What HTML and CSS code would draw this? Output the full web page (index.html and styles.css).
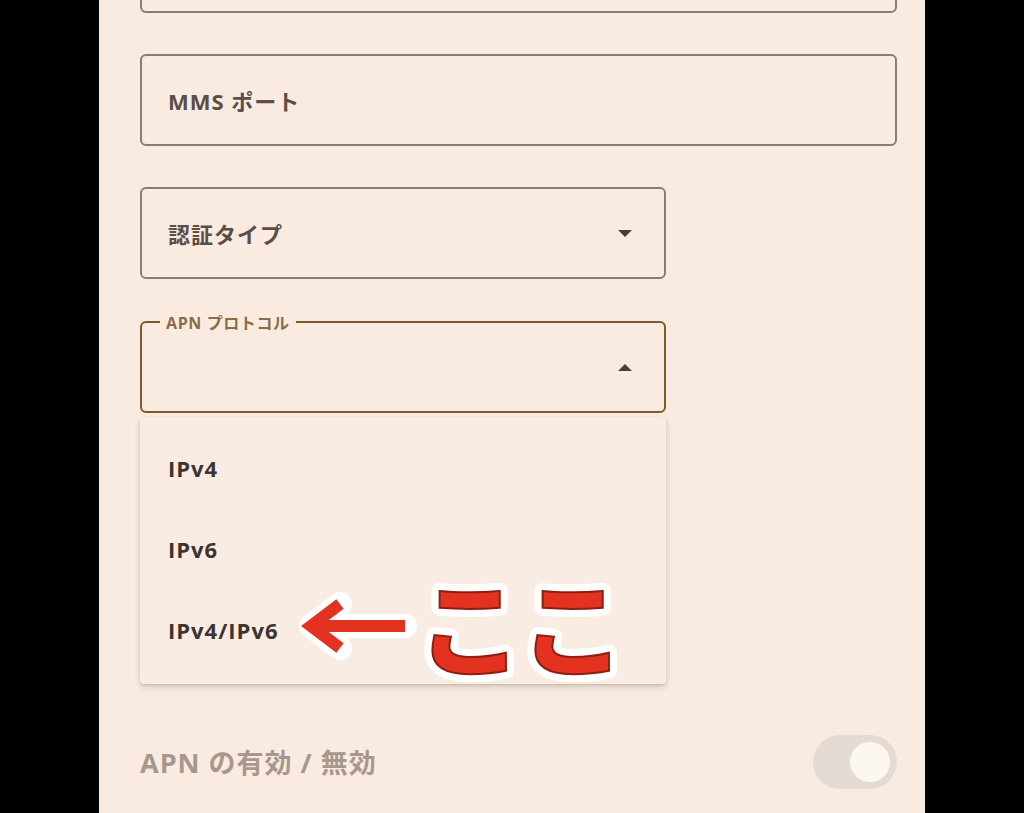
FILE: index.html
```html
<!DOCTYPE html>
<html lang="ja">
<head>
    <meta charset="UTF-8">
    <meta name="viewport" content="width=device-width, initial-scale=1.0">
    <title>APN 設定</title>
    <link rel="stylesheet" href="styles.css">
</head>
<body>

    <div class="screen">
        <div class="form">
            <div class="field full"></div>

            <div class="field full">
                <span class="field-text">MMS ポート</span>
            </div>

            <div class="field half">
                <span class="field-text">認証タイプ</span>
                <svg class="caret" width="14" height="7" viewBox="0 0 14 7"><path d="M0 0 H14 L7 7 Z"/></svg>
            </div>

            <div class="field half active">
                <span class="float-label">APN プロトコル</span>
                <svg class="caret" width="14" height="7" viewBox="0 0 14 7"><path d="M0 7 H14 L7 0 Z"/></svg>

                <ul class="menu">
                    <li>IPv4</li>
                    <li>IPv6</li>
                    <li>IPv4/IPv6</li>
                </ul>
            </div>

            <div class="toggle-row">
                <span class="toggle-text">APN の有効 / 無効</span>
                <span class="switch"><span class="thumb"></span></span>
            </div>
        </div>

        <!-- annotation drawn over the screenshot -->
        <svg class="note" width="400" height="200" viewBox="290 520 400 200">
            <path class="arrow-back" d="M340 604 L311 626 L340 648 M313 626 H405"/>
            <path class="arrow-front" d="M340 604 L311 626 L340 648 M313 626 H405"/>
            <text class="note-back" x="418" y="669">ここ</text>
            <text class="note-front" x="418" y="669">ここ</text>
        </svg>
    </div>

</body>
</html>
```

FILE: styles.css
```css
body {
    margin: 0;
    padding: 0;
    background-color: #000;
    font-family: "Open Sans", "Noto Sans CJK JP", sans-serif;
}

.screen {
    position: relative;
    width: 826px;
    height: 813px;
    margin-left: 99px;
    background-color: #f9ebe0;
    overflow: hidden;
}

.form {
    display: flex;
    flex-direction: column;
    gap: 41px;
    margin-top: -79px;
    padding: 0 28px 0 41px;
}

.field {
    position: relative;
    box-sizing: border-box;
    height: 92px;
    border: 2px solid #8c7d73;
    border-radius: 6px;
    display: flex;
    align-items: center;
    padding: 0 32px 0 26px;
}

.field.full {
    width: 757px;
}

.field.half {
    width: 526px;
}

.field.active {
    border-color: #7e5a2c;
    margin-top: 1px;
}

.field-text {
    font-size: 22px;
    font-weight: 700;
    letter-spacing: 1px;
    color: #5a4e47;
}

.caret {
    margin-left: auto;
    fill: #4a3f38;
}

.float-label {
    position: absolute;
    top: -13px;
    left: 18px;
    padding: 0 6px;
    background-color: #f9ebe0;
    font-size: 16px;
    font-weight: 700;
    letter-spacing: 0.6px;
    color: #8a6b4a;
}

.menu {
    position: absolute;
    top: calc(100% + 6px);
    left: -2px;
    width: 526px;
    margin: 0;
    padding: 10px 0 14px;
    list-style: none;
    background-color: #f9ece2;
    border-radius: 4px;
    box-shadow: 0 3px 6px rgba(60, 40, 20, 0.18), 0 1px 2px rgba(60, 40, 20, 0.12);
    z-index: 2;
}

.menu li {
    height: 81px;
    display: flex;
    align-items: center;
    padding-left: 28px;
    font-size: 22px;
    font-weight: 700;
    letter-spacing: 1px;
    color: #3b3431;
}

.toggle-row {
    display: flex;
    align-items: center;
    justify-content: space-between;
    margin-top: 280px;
    height: 55px;
}

.toggle-text {
    font-size: 27px;
    font-weight: 700;
    letter-spacing: 1px;
    color: #a8978d;
}

.switch {
    display: flex;
    align-items: center;
    justify-content: flex-end;
    box-sizing: border-box;
    width: 84px;
    height: 54px;
    padding-right: 7px;
    border-radius: 27px;
    background-color: #e5dbd5;
}

.thumb {
    width: 40px;
    height: 40px;
    border-radius: 50%;
    background-color: #fdf7f2;
}

.note {
    position: absolute;
    left: 191px;
    top: 520px;
    z-index: 3;
}

.arrow-back {
    fill: none;
    stroke: #fff;
    stroke-width: 24;
    stroke-linejoin: round;
    stroke-linecap: round;
}

.arrow-front {
    fill: none;
    stroke: #e3321f;
    stroke-width: 12;
    stroke-linejoin: miter;
}

.note-back,
.note-front {
    font-family: "Noto Sans CJK JP", sans-serif;
    font-size: 104px;
    font-weight: 900;
    letter-spacing: -1px;
}

.note-back {
    fill: #fff;
    stroke: #fff;
    stroke-width: 16;
    stroke-linejoin: round;
}

.note-front {
    fill: #e3321f;
    stroke: #8e1d12;
    stroke-width: 2;
}
```
